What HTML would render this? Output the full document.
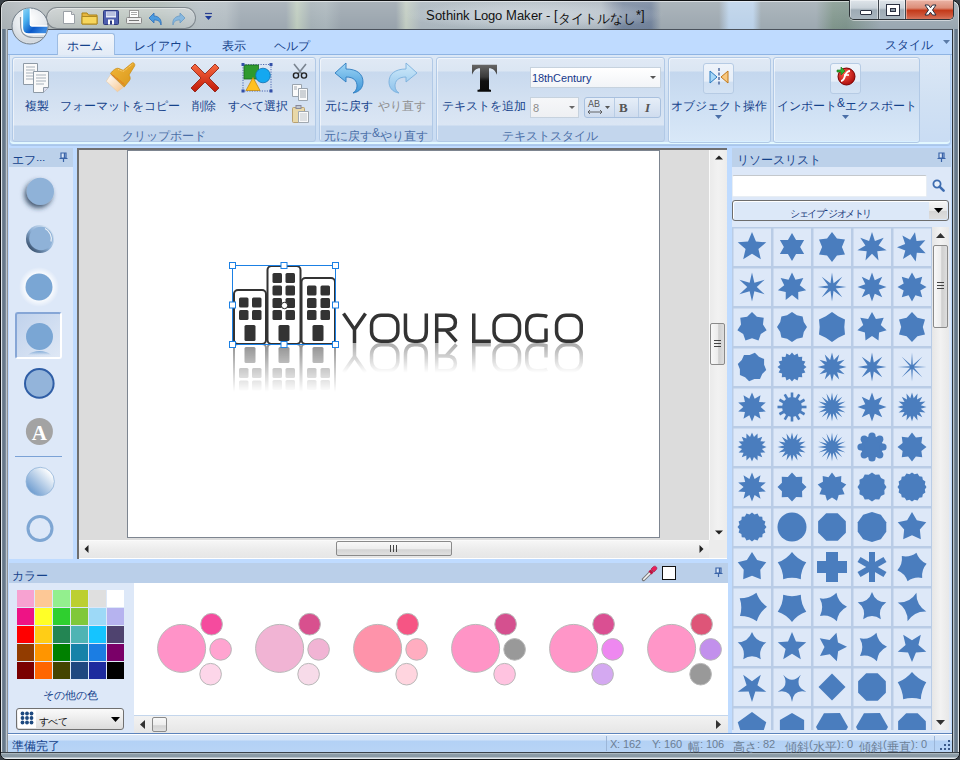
<!DOCTYPE html>
<html><head><meta charset="utf-8">
<style>
@font-face{font-family:"Liberation Sans";src:local("Liberation Sans"),local("LiberationSans");unicode-range:U+0000-2FFF,U+FB00-FEFF,U+FFF0-FFFF;}
@font-face{font-family:"Liberation Sans";src:local("Liberation Sans"),local("LiberationSans");size-adjust:133.33%;unicode-range:U+3000-9FFF,U+FF00-FFEF;}
*{box-sizing:border-box}
html,body{margin:0;padding:0}
body{width:960px;height:760px;overflow:hidden;position:relative;font-family:"Liberation Sans",sans-serif;font-size:12px;color:#15428b;background:#3a4148}
.a{position:absolute}
.j{position:relative;top:2.5px}
.t{position:absolute;white-space:nowrap;line-height:14px;font-size:12px}
svg{position:absolute;overflow:visible}
</style></head><body>
<!-- glass frame -->
<div class="a" style="left:0;top:0;width:960px;height:760px;border-radius:8px 8px 7px 7px;border:1px solid #101214;box-shadow:inset 0 0 0 1px rgba(255,255,255,.55);background:linear-gradient(180deg,rgba(255,255,255,.18) 0,rgba(255,255,255,0) 30px),linear-gradient(90deg,#a6aeb2 0px,#b4babe 30px,#a9b5ac 110px,#a8b4b0 160px,#b2bcc2 200px,#b0bac0 225px,#9ca7b0 240px,#9ca7b0 285px,#bccabc 296px,#a2aeb4 310px,#a6b2b8 325px,#97a2ab 340px,#97a2ab 395px,#c0cbc0 405px,#a8b4bc 420px,#aab6be 500px,#a8b3bc 600px,#8794a6 612px,#72839b 622px,#6e7f98 650px,#9ba6ae 660px,#9ba6ae 718px,#b9d0e8 728px,#b9d0e8 752px,#9ca8b0 760px,#9ca8b0 815px,#7d9389 832px,#7a9088 845px,#98a6b0 880px,#98a6b0 960px)"></div>
<div class="a" style="left:405px;top:0px;width:260px;height:30px;background:radial-gradient(closest-side,rgba(235,240,245,.5) 0%,rgba(225,232,238,.3) 60%,rgba(210,220,228,0) 100%)"></div>
<!-- left/right/bottom frame streaks -->
<div class="a" style="left:1px;top:29px;width:7px;height:725px;border-radius:0 0 0 6px;background:linear-gradient(90deg,#dfe6ea 0,#dfe6ea 1px,#7d8c9a 1px,#5f7284 3px,#8797a6 5px,#eef2f4 6px,#2b333b 7px)"></div>
<div class="a" style="left:952px;top:29px;width:7px;height:725px;background:linear-gradient(90deg,#2b333b 0,#2b333b 1px,#eef2f4 1px,#8797a6 2px,#5f7284 4px,#7d8c9a 6px,#dfe6ea 6px)"></div>
<div class="a" style="left:1px;top:752px;width:958px;height:7px;border-radius:0 0 6px 6px;background:linear-gradient(#3b434b 0,#3b434b 1px,#c6d0d6 1px,#8e9ea8 2px,#8898a4 5px,#e6ecf0 6px,#e6ecf0 7px)"></div>
<!-- client -->
<div class="a" style="left:8px;top:29px;width:944px;height:723px;border-top:1px solid #4a525c;background:#bfdbff"></div>
<!-- QAT pill -->
<div class="a" style="left:46px;top:7px;width:150px;height:22px;border-radius:11px;border:1px solid rgba(60,70,80,.5);background:linear-gradient(rgba(255,255,255,.32),rgba(255,255,255,.12));box-shadow:inset 0 1px 0 rgba(255,255,255,.4)"></div>
<!-- QAT icons -->
<svg style="left:62px;top:10px" width="14" height="15" viewBox="0 0 14 15"><path d="M1.5 1.5h8l3 3v9h-11z" fill="#fff" stroke="#9aa0a6"/><path d="M9.5 1.5v3h3" fill="#ddd" stroke="#9aa0a6"/></svg>
<svg style="left:81px;top:11px" width="17" height="14" viewBox="0 0 17 14"><path d="M1 2h5l1.5 2H16v9H1z" fill="#e6b640" stroke="#a98215"/><path d="M1 5.5h15V13H1z" fill="#f7d65c" stroke="#b08a20"/></svg>
<svg style="left:103px;top:10px" width="16" height="15" viewBox="0 0 16 15"><rect x=".5" y=".5" width="15" height="14" rx="1" fill="#4e5fae" stroke="#2d3a80"/><rect x="3" y="1.5" width="10" height="6" fill="#e9eef8"/><path d="M3.5 3h9M3.5 5h9" stroke="#8893c8"/><rect x="5" y="9.5" width="6" height="5" fill="#fff"/><rect x="7" y="10.5" width="2" height="4" fill="#2d3a80"/></svg>
<svg style="left:126px;top:10px" width="16" height="15" viewBox="0 0 16 15"><rect x="3.5" y=".5" width="9" height="7" fill="#fff" stroke="#999"/><path d="M5 2.5h6M5 4.5h6" stroke="#aaa"/><rect x=".5" y="7.5" width="15" height="6" rx="1" fill="#eee" stroke="#888"/><path d="M3 10.5h10" stroke="#777"/></svg>
<svg style="left:148px;top:12px" width="16" height="14" viewBox="0 0 16 14"><path d="M6 1L1 6l5 5V8c4 0 6 1 7 5 1-5-2-9-7-9z" fill="#4a9be0" stroke="#2e6fb8" stroke-width=".8"/></svg>
<svg style="left:170px;top:12px" width="16" height="14" viewBox="0 0 16 14"><path d="M10 1l5 5-5 5V8C6 8 4 9 3 13 2 8 5 4 10 4z" fill="#88b8df" stroke="#6a9ac4" stroke-width=".8"/></svg>
<svg style="left:205px;top:13px" width="7" height="8" viewBox="0 0 7 8"><path d="M0 .5h7" stroke="#2a3f8f" stroke-width="1.2"/><path d="M0 3h7L3.5 7z" fill="#1c3a9a"/></svg>
<!-- app orb -->
<svg style="left:11px;top:7px;z-index:50" width="38" height="38" viewBox="0 0 38 38">
<defs><radialGradient id="orb" cx=".5" cy=".3" r=".75"><stop offset="0" stop-color="#ffffff"/><stop offset=".55" stop-color="#e6eaee"/><stop offset=".85" stop-color="#d2d8de"/><stop offset="1" stop-color="#eef1f4"/></radialGradient>
<linearGradient id="lg" x1="0" y1="0" x2=".9" y2=".75"><stop offset="0" stop-color="#9adcf8"/><stop offset=".35" stop-color="#4ab0ee"/><stop offset=".7" stop-color="#0a58c8"/><stop offset="1" stop-color="#3a88e0"/></linearGradient>
<clipPath id="oc"><circle cx="19" cy="19" r="17.5"/></clipPath></defs>
<circle cx="19" cy="19" r="18" fill="url(#orb)" stroke="#6f7b86" stroke-width="1"/>
<g clip-path="url(#oc)">
<path d="M9.5 10c0 10 0 14 3 17s6 3.5 10 3.5h13" fill="none" stroke="#8e98a2" stroke-width="1.2"/>
<path d="M11.5 0h7.8v17.5c0 1 .5 1.5 1.5 1.5h17v8H17.5c-4 0-6-2.3-6-6z" fill="url(#lg)" stroke="#fff" stroke-width="1.3"/>
</g>
</svg>
<!-- title -->
<div class="t" style="left:426px;top:9px;font-size:12.5px;color:#111;line-height:14px">Sothink Logo Maker - [<span class="j">タイトルなし</span>*]</div>
<!-- window buttons -->
<div class="a" style="left:849px;top:0;width:105px;height:20px;border:1px solid #2e3338;border-top:none;border-radius:0 0 5px 5px;overflow:hidden;box-shadow:0 1px 0 rgba(255,255,255,.5)">
 <div class="a" style="left:0;top:0;width:29px;height:20px;background:linear-gradient(#dfe5ea 0,#c9d2d9 40%,#9eabb5 50%,#aab6bf 100%);border-right:1px solid #3e454c;box-shadow:inset 0 0 0 1px rgba(255,255,255,.45)"></div>
 <div class="a" style="left:29px;top:0;width:27px;height:20px;background:linear-gradient(#dfe5ea 0,#c9d2d9 40%,#9eabb5 50%,#aab6bf 100%);border-right:1px solid #3e454c;box-shadow:inset 0 0 0 1px rgba(255,255,255,.45)"></div>
 <div class="a" style="left:56px;top:0;width:48px;height:20px;background:linear-gradient(#eab4a6 0,#dc8d78 40%,#c43a1a 52%,#cf5a3e 80%,#d98068 100%);box-shadow:inset 0 0 0 1px rgba(255,220,210,.5)"></div>
 <div class="a" style="left:10px;top:10px;width:12px;height:5px;background:#fff;border:1px solid #2a3040;border-radius:1px"></div>
 <div class="a" style="left:37px;top:5px;width:12px;height:10px;background:#8e9aa6;border:3px solid #fff;box-shadow:0 0 0 1px #2a3040,inset 0 0 0 1px #2a3040"></div>
 <svg style="left:74px;top:4px" width="13" height="12" viewBox="0 0 13 12"><path d="M1 1h3.5l2 2.8 2-2.8H12L8.5 6 12 11H8.5l-2-2.8-2 2.8H1L4.5 6z" fill="#fff" stroke="#2a3040" stroke-width="1" stroke-linejoin="round"/></svg>
</div>
<!-- tab row -->
<div class="a" style="left:8px;top:30px;width:944px;height:25px;background:#bfdbff;border-bottom:1px solid #8fb4e3"></div>
<div class="a" style="left:57px;top:33px;width:58px;height:23px;border:1px solid #9dbce2;border-bottom:none;border-radius:3px 3px 0 0;background:linear-gradient(#f2f6fb,#e2ebf6)"></div>
<div class="t" style="left:67px;top:36px"><span class="j">ホーム</span></div>
<div class="t" style="left:134px;top:36px"><span class="j">レイアウト</span></div>
<div class="t" style="left:222px;top:36px"><span class="j">表示</span></div>
<div class="t" style="left:274px;top:36px"><span class="j">ヘルプ</span></div>
<div class="t" style="left:885px;top:35px"><span class="j">スタイル</span></div>
<svg style="left:943px;top:40px" width="7" height="4"><path d="M0 0h7L3.5 4z" fill="#5b7ba8"/></svg>
<!-- ribbon body -->
<div class="a" style="left:9px;top:55px;width:942px;height:90px;border:1px solid #aecbee;border-top:none;border-radius:0 0 4px 4px;background:linear-gradient(#dce8f6 0,#d1e1f3 50%,#c9dcf3 100%);box-shadow:inset 0 -2px 0 #e2f8ff,0 1px 0 #a9c6ea"></div>
<!-- groups -->
<div class="a grp" style="left:12px;top:57px;width:304px;height:85px"></div>
<div class="a grp" style="left:319px;top:57px;width:114px;height:85px"></div>
<div class="a grp" style="left:436px;top:57px;width:229px;height:85px"></div>
<div class="a grp2" style="left:668px;top:57px;width:103px;height:86px"></div>
<div class="a grp2" style="left:773px;top:57px;width:147px;height:86px"></div>
<style>
.grp{border:1px solid #b1c9e6;border-radius:3px;background:linear-gradient(#e0e9f5 0,#dbe6f3 13px,#c8d9ee 14px,#d2e0f1 40px,#dbe6f4 67px,#c3d6ed 68px,#c3d6ed 100%);box-shadow:inset 1px 1px 0 rgba(255,255,255,.55)}
.grp2{border:1px solid #b1c9e6;border-radius:3px;background:linear-gradient(#e0e9f5 0,#dbe6f3 13px,#c4d7ee 14px,#cddff3 45px,#d9e8f8 100%);box-shadow:inset 1px 1px 0 rgba(255,255,255,.55),inset 0 -1px 0 #d8f0ff}
.gt{color:#4a6fa8}
.gray{color:#8e8e8e}
</style>
<!-- group titles -->
<div class="t gt" style="left:122px;top:126px"><span class="j">クリップボード</span></div>
<div class="t gt" style="left:324px;top:126px"><span class="j">元に戻す</span>&amp;<span class="j">やり直す</span></div>
<div class="t gt" style="left:502px;top:126px"><span class="j">テキストスタイル</span></div>
<!-- labels -->
<div class="t" style="left:25px;top:96px"><span class="j">複製</span></div>
<div class="t" style="left:60px;top:96px"><span class="j">フォーマットをコピー</span></div>
<div class="t" style="left:192px;top:96px"><span class="j">削除</span></div>
<div class="t" style="left:228px;top:96px"><span class="j">すべて選択</span></div>
<div class="t" style="left:325px;top:96px"><span class="j">元に戻す</span></div>
<div class="t gray" style="left:378px;top:96px"><span class="j">やり直す</span></div>
<div class="t" style="left:442px;top:96px"><span class="j">テキストを追加</span></div>
<div class="t" style="left:671px;top:96px"><span class="j">オブジェクト操作</span></div>
<div class="t" style="left:777px;top:96px"><span class="j">インポート</span>&amp;<span class="j">エクスポート</span></div>
<svg style="left:715px;top:115px" width="7" height="4"><path d="M0 0h7L3.5 4z" fill="#4a6fa8"/></svg>
<svg style="left:842px;top:115px" width="7" height="4"><path d="M0 0h7L3.5 4z" fill="#4a6fa8"/></svg>
<!-- ribbon icons -->
<svg style="left:21px;top:62px" width="30" height="31" viewBox="0 0 30 31">
<path d="M2.5 1.5h14v21h-14z" fill="#fafafa" stroke="#8e9aa6"/>
<path d="M5 5h9M5 8h9M5 11h9M5 14h9M5 17h7" stroke="#a6b0ba"/>
<path d="M12.5 9.5h15v16l-5 5h-10z" fill="#fafafa" stroke="#8e9aa6"/>
<path d="M15 13h10M15 16h10M15 19h10M15 22h8" stroke="#a6b0ba"/>
<path d="M22.5 30.5v-5h5" fill="#dde" stroke="#8e9aa6"/>
</svg>
<svg style="left:100px;top:58px" width="45" height="40" viewBox="0 0 45 40">
<defs><linearGradient id="br" x1="0" y1="0" x2="1" y2="1"><stop offset="0" stop-color="#f2b73a"/><stop offset="1" stop-color="#d8961a"/></linearGradient>
<linearGradient id="bri" x1="0" y1="0" x2="1" y2="1"><stop offset="0" stop-color="#ffffff"/><stop offset="1" stop-color="#f7c48a"/></linearGradient></defs>
<path d="M10.5 16.8L6.3 23.2 17.4 33.7 23.6 29z" fill="url(#bri)" stroke="#e8c8a0" stroke-width=".6"/>
<path d="M10.5 15.5C13 12 16 10 18 10.3 20 10.5 22 12.5 23.5 12L32 5C33.5 4 35.5 6 34.6 8L29 17C30.5 19 30.5 21 29.5 22.5L24.2 29z" fill="url(#br)" stroke="#c88a10" stroke-width=".7"/>
<path d="M12.5 17.5L25 27.5M11.5 16L24.5 26" stroke="#e06a20" stroke-width=".8" stroke-dasharray="1 .8"/>
<path d="M18 11.5C20 12 22 13.5 24 13L32.5 6" stroke="#ffe0a0" stroke-width=".8" fill="none" stroke-dasharray="1 .8"/>
</svg>
<svg style="left:190px;top:63px" width="30" height="30" viewBox="0 0 30 30">
<defs><linearGradient id="xr" x1="0" y1="0" x2="0" y2="1"><stop offset="0" stop-color="#f86a40"/><stop offset="1" stop-color="#c01808"/></linearGradient></defs>
<path d="M5 1L15 11 25 1 29 5 19 15 29 25 25 29 15 19 5 29 1 25 11 15 1 5z" fill="url(#xr)" stroke="#8a1a0a" stroke-width=".8" stroke-linejoin="round"/>
</svg>
<svg style="left:241px;top:62px" width="32" height="31" viewBox="0 0 32 31">
<rect x="2" y="2.5" width="28" height="26.5" fill="none" stroke="#2b4aa0" stroke-width=".8" stroke-dasharray="1.2 1.3"/>
<rect x="3" y="3" width="14.5" height="14" fill="#2e9a2e" stroke="#1d6a1d" stroke-width=".8"/>
<circle cx="22" cy="13.5" r="7.3" fill="#14a8f0" stroke="#1070b0" stroke-width=".8"/>
<path d="M12 15.5l7 13H5z" fill="#ffc020" stroke="#c08a10" stroke-width=".8"/>
<rect x=".5" y="1" width="3" height="3" fill="#3350a8"/><rect x="28.5" y="1" width="3" height="3" fill="#3350a8"/><rect x=".5" y="27.5" width="3" height="3" fill="#3350a8"/><rect x="28.5" y="27.5" width="3" height="3" fill="#3350a8"/>
</svg>
<svg style="left:291px;top:63px" width="18" height="16" viewBox="0 0 18 16"><path d="M3 1l8 10M15 1L7 11" stroke="#7a8490" stroke-width="1.6"/><circle cx="5" cy="12.5" r="2.6" fill="none" stroke="#222" stroke-width="1.4"/><circle cx="13" cy="12.5" r="2.6" fill="none" stroke="#222" stroke-width="1.4"/></svg>
<svg style="left:292px;top:84px" width="17" height="17" viewBox="0 0 17 17"><path d="M.5 .5h9v12h-9z" fill="#fbfbfb" stroke="#9aa4ae"/><path d="M6.5 4.5h9v12h-9z" fill="#fbfbfb" stroke="#9aa4ae"/><path d="M8 7h6M8 9h6M8 11h6M8 13h6M2 3h3M2 5h3" stroke="#8a949e" stroke-width=".8"/></svg>
<svg style="left:292px;top:105px" width="17" height="18" viewBox="0 0 17 18"><rect x=".5" y="2.5" width="12" height="15" rx="1" fill="#e8d8a8" stroke="#b8a070"/><rect x="4" y=".5" width="5" height="3" fill="#c0c8d0" stroke="#889"/><path d="M6.5 6.5h10v11h-10z" fill="#fafafa" stroke="#a0a8b0"/><path d="M8 9h7M8 11h7M8 13h7M8 15h7" stroke="#c0c6cc"/></svg>
<!-- undo redo -->
<svg style="left:334px;top:62px" width="30" height="31" viewBox="0 0 30 31">
<defs><linearGradient id="ug" x1="0" y1="0" x2="0" y2="1"><stop offset="0" stop-color="#9fd6f6"/><stop offset="1" stop-color="#3c95d8"/></linearGradient></defs>
<path d="M12 1L1 11l11 9v-5c8 0 11 4 11 9 0 3-2 6-4 7 7-1 10-6 10-11 0-8-6-13-17-13z" fill="url(#ug)" stroke="#2e7cc0" stroke-width=".9" stroke-linejoin="round"/>
</svg>
<svg style="left:388px;top:62px" width="30" height="31" viewBox="0 0 30 31">
<defs><linearGradient id="rg" x1="0" y1="0" x2="0" y2="1"><stop offset="0" stop-color="#d2ebfa"/><stop offset="1" stop-color="#8cc2ec"/></linearGradient></defs>
<path d="M18 1l11 10-11 9v-5C10 15 7 19 7 24c0 3 2 6 4 7-7-1-10-6-10-11C1 12 7 7 18 7z" fill="url(#rg)" stroke="#7ab0dc" stroke-width=".9" stroke-linejoin="round"/>
</svg>
<!-- T icon -->
<svg style="left:470px;top:63px" width="28" height="30" viewBox="0 0 28 30">
<defs><linearGradient id="tg" x1="0" y1="0" x2="0" y2="1"><stop offset="0" stop-color="#666"/><stop offset=".45" stop-color="#3a3a3a"/><stop offset=".6" stop-color="#111"/><stop offset="1" stop-color="#0a0a0a"/></linearGradient></defs>
<path d="M2 1.8H27V11.8C25.5 8 23 5.3 19 5.3V26C19 26.5 20 26.6 21 26.8V28.7H7.5V26.8C9 26.6 10 26.5 10 26V5.3C6 5.3 3.5 8 2 11.8Z" fill="url(#tg)"/>
</svg>
<!-- font combos -->
<div class="a" style="left:530px;top:67px;width:131px;height:21px;border:1px solid #c6d2de;background:linear-gradient(#fff,#f2f4f7)"></div>
<div class="t" style="left:532px;top:71px;font-size:11px;color:#14388a">18thCentury</div>
<svg style="left:650px;top:76px" width="6" height="3"><path d="M0 0h6L3 3z" fill="#555"/></svg>
<div class="a" style="left:530px;top:97px;width:49px;height:21px;border:1px solid #c6d2de;background:linear-gradient(#f6f7f9,#eef0f3)"></div>
<div class="t" style="left:533px;top:101px;font-size:11px;color:#8a8a8a">8</div>
<svg style="left:569px;top:106px" width="6" height="3"><path d="M0 0h6L3 3z" fill="#666"/></svg>
<div class="a" style="left:584px;top:97px;width:77px;height:21px;border:1px solid #a8c0de;border-radius:3px;background:linear-gradient(#e6eef8,#cfdcee)"></div>
<div class="a" style="left:614px;top:98px;width:1px;height:19px;background:#b8cce4"></div>
<div class="a" style="left:638px;top:98px;width:1px;height:19px;background:#b8cce4"></div>
<svg style="left:587px;top:99px" width="26" height="17" viewBox="0 0 26 17"><text x="1" y="8" font-family="Liberation Sans" font-size="8.5" fill="#555">AB</text><path d="M1 13h14M1 13l2-2M1 13l2 2M15 13l-2-2M15 13l-2 2" stroke="#555" stroke-width=".9" fill="none"/><path d="M18 7h5l-2.5 3z" fill="#555"/></svg>
<div class="t" style="left:619px;top:100px;font:bold 13px 'Liberation Serif';color:#555">B</div>
<div class="t" style="left:645px;top:100px;font:bold italic 13px 'Liberation Serif';color:#555">I</div>
<!-- object ops / import icon boxes -->
<div class="a" style="left:703px;top:63px;width:31px;height:31px;border:1px solid #b6cbe4;border-radius:3px;background:linear-gradient(#eef3fa 0,#e6eef8 60%,#cfdff2 61%,#d4e3f4 100%)"></div>
<svg style="left:709px;top:67px" width="20" height="20" viewBox="0 0 20 20"><path d="M1 4v12l7-6z" fill="#a8d8f8" stroke="#2a7ac0"/><path d="M19 4v12l-7-6z" fill="#f8c880" stroke="#c07818"/><path d="M10 1v18" stroke="#2a4a8a" stroke-width="1.2" stroke-dasharray="3 1.5"/></svg>
<div class="a" style="left:830px;top:63px;width:31px;height:31px;border:1px solid #b6cbe4;border-radius:3px;background:linear-gradient(#eef3fa 0,#e6eef8 60%,#cfdff2 61%,#d4e3f4 100%)"></div>
<svg style="left:836px;top:66px" width="20" height="20" viewBox="0 0 20 20"><defs><radialGradient id="fl" cx=".4" cy=".35" r=".7"><stop offset="0" stop-color="#ff5a4a"/><stop offset="1" stop-color="#a80808"/></radialGradient></defs><circle cx="10.5" cy="10.5" r="8.5" fill="url(#fl)" stroke="#700"/><path d="M14 5c-3 0-4 2-5 5s-2 5-4 5" stroke="#fff" stroke-width="2" fill="none"/><path d="M8 9h5" stroke="#fff" stroke-width="1.6"/><path d="M1 4h4V1l4 4-4 4V6H1z" fill="#30b030" stroke="#107010" stroke-width=".6"/></svg>
<!-- left effects panel -->
<div class="a" style="left:9px;top:148px;width:64px;height:411px;background:#dde8f8"></div>
<div class="a" style="left:9px;top:148px;width:64px;height:19px;background:#bcd1ea"></div>
<div class="t" style="left:12px;top:150px"><span class="j">エフ</span>...</div>
<svg style="left:59px;top:152px" width="9" height="10" viewBox="0 0 9 10"><path d="M2 1h5v5H2z" fill="#dde8f8" stroke="#3a64a8" stroke-width="1.2"/><path d="M5.5 1v5" stroke="#3a64a8" stroke-width="1.4"/><path d="M.5 6.5h8M4.5 6.5v3.5" stroke="#3a64a8" stroke-width="1.2"/></svg>
<!-- selected effect bg -->
<div class="a" style="left:15px;top:312px;width:47px;height:47px;border:2px solid #86a6d6;border-right-color:#fff;border-bottom-color:#fff;border-radius:3px;background:linear-gradient(135deg,#c0d2ec,#dfe8f5)"></div>
<svg style="left:9px;top:167px" width="64" height="392" viewBox="0 0 64 392">
<defs>
<filter id="sh1" x="-50%" y="-50%" width="200%" height="200%"><feGaussianBlur in="SourceAlpha" stdDeviation="2.4"/><feOffset dx="-2.5" dy="2.5" result="o"/><feFlood flood-color="#1c3450" flood-opacity=".8"/><feComposite in2="o" operator="in"/><feMerge><feMergeNode/><feMergeNode in="SourceGraphic"/></feMerge></filter>
<filter id="gl" x="-50%" y="-50%" width="200%" height="200%"><feMorphology in="SourceAlpha" operator="dilate" radius="2"/><feGaussianBlur stdDeviation="2.5"/><feFlood flood-color="#fff"/><feComposite in2="" operator="in"/></filter>
<radialGradient id="glow"><stop offset=".6" stop-color="#fff" stop-opacity="1"/><stop offset="1" stop-color="#fff" stop-opacity="0"/></radialGradient>
<linearGradient id="bev" x1="1" y1="0" x2="0" y2="1"><stop offset="0" stop-color="#f4f8fc"/><stop offset=".5" stop-color="#8fb2d8"/><stop offset="1" stop-color="#1a2e48"/></linearGradient>
<linearGradient id="grd" x1="1" y1="0" x2="0" y2="1"><stop offset=".15" stop-color="#ffffff"/><stop offset=".85" stop-color="#6f9dd0"/></linearGradient>
<linearGradient id="refl" x1="0" y1="0" x2="0" y2="1"><stop offset="0" stop-color="#7aa6d4" stop-opacity=".9"/><stop offset="1" stop-color="#7aa6d4" stop-opacity="0"/></linearGradient>
</defs>
<circle cx="31.3" cy="24.4" r="13.7" fill="#8fb2d8" filter="url(#sh1)"/>
<circle cx="31" cy="72" r="14" fill="url(#bev)"/>
<circle cx="32" cy="71.5" r="11.8" fill="#8fb2d8"/>
<path d="M36 61.5a11.5 11.5 0 0 1 6 13" fill="none" stroke="#fff" stroke-width="1.2" stroke-opacity=".8"/>
<circle cx="30" cy="120" r="20" fill="url(#glow)"/>
<circle cx="30" cy="120" r="13.5" fill="#7aa6d4"/>
<circle cx="30.5" cy="169.5" r="13.5" fill="#7aa6d4"/>
<path d="M19 188c3-3 7-4 11.5-4s8.5 1 11.5 4z" fill="url(#refl)"/>
<circle cx="30.3" cy="216.4" r="14.3" fill="#93b4da" stroke="#2f5ea6" stroke-width="2"/>
<circle cx="30.4" cy="264.4" r="13.5" fill="#a3a3a3"/>
<text x="30.4" y="272.5" text-anchor="middle" font-family="Liberation Serif" font-weight="bold" font-size="21" fill="#fff">A</text>
<path d="M6 289.5h47" stroke="#7ba2d6" stroke-width="1"/>
<circle cx="31.2" cy="314.5" r="14.2" fill="url(#grd)" stroke="#8fb2d8" stroke-width=".8"/>
<circle cx="31" cy="361.5" r="12" fill="none" stroke="#7ea6d3" stroke-width="3"/>
</svg>
<!-- canvas -->
<div class="a" style="left:77px;top:148px;width:650px;height:411px;background:#dcdcdc;border-left:2px solid #6f6f6f;border-top:2px solid #6f6f6f;box-shadow:inset -1px -1px 0 #fff"></div>
<div class="a" style="left:127px;top:150px;width:533px;height:388px;background:#fff;border:1px solid #7d8590"></div>
<!-- v scroll -->
<div class="a" style="left:709px;top:150px;width:18px;height:390px;background:linear-gradient(90deg,#fafafa 0,#fafafa 1px,#ebebeb 1px,#f2f2f2 50%,#ececec)"></div>
<svg style="left:715px;top:155px" width="8" height="5"><path d="M0 4.5h8L4 .5z" fill="#222"/></svg>
<svg style="left:715px;top:530px" width="8" height="5"><path d="M0 .5h8L4 4.5z" fill="#222"/></svg>
<div class="a" style="left:710px;top:323px;width:15px;height:42px;border:1px solid #8a8a8a;border-radius:2px;background:linear-gradient(90deg,#f8f8f8 0,#ececec 50%,#cfcfcf 60%,#dedede 100%)"></div>
<div class="a" style="left:714px;top:340px;width:7px;height:8px;background:linear-gradient(#444 0,#444 1px,transparent 1px,transparent 3px,#444 3px,#444 4px,transparent 4px,transparent 6px,#444 6px,#444 7px,transparent 7px)"></div>
<!-- h scroll -->
<div class="a" style="left:79px;top:540px;width:630px;height:18px;background:linear-gradient(#f6f6f6 0,#ececec 50%,#e6e6e6 100%);border-top:1px solid #fafafa"></div>
<div class="a" style="left:709px;top:540px;width:18px;height:18px;background:#ececec"></div>
<svg style="left:84px;top:545px" width="5" height="8"><path d="M4.5 0v8L.5 4z" fill="#222"/></svg>
<svg style="left:699px;top:545px" width="5" height="8"><path d="M.5 0v8L4.5 4z" fill="#222"/></svg>
<div class="a" style="left:336px;top:541px;width:116px;height:15px;border:1px solid #8a8a8a;border-radius:2px;background:linear-gradient(#f8f8f8 0,#eeeeee 50%,#d4d4d4 60%,#e0e0e0 100%)"></div>
<div class="a" style="left:390px;top:545px;width:8px;height:7px;background:linear-gradient(90deg,#444 0,#444 1px,transparent 1px,transparent 3px,#444 3px,#444 4px,transparent 4px,transparent 6px,#444 6px,#444 7px,transparent 7px)"></div>
<svg style="left:128px;top:151px" width="531" height="386" viewBox="128 151 531 386">
<defs>
<linearGradient id="rfade" gradientUnits="userSpaceOnUse" x1="0" y1="344" x2="0" y2="392"><stop offset="0" stop-color="#fff" stop-opacity=".55"/><stop offset="1" stop-color="#fff" stop-opacity="0"/></linearGradient>
<mask id="rmask" maskUnits="userSpaceOnUse" x="128" y="344" width="531" height="60"><rect x="128" y="344" width="531" height="60" fill="url(#rfade)"/></mask>
<linearGradient id="tfade" gradientUnits="userSpaceOnUse" x1="0" y1="343" x2="0" y2="373"><stop offset="0" stop-color="#fff" stop-opacity=".42"/><stop offset="1" stop-color="#fff" stop-opacity="0"/></linearGradient>
<mask id="tmask" maskUnits="userSpaceOnUse" x="128" y="343" width="531" height="40"><rect x="128" y="343" width="531" height="40" fill="url(#tfade)"/></mask>
</defs>
<g mask="url(#rmask)"><g transform="translate(0,688) scale(1,-1)"><rect x="234" y="290" width="32" height="54" rx="4" fill="#fff" stroke="#333" stroke-width="2"/>
<rect x="267.5" y="266" width="33" height="78" rx="4" fill="#fff" stroke="#333" stroke-width="2"/>
<rect x="301.5" y="278" width="33.5" height="66" rx="4" fill="#fff" stroke="#333" stroke-width="2"/>
<rect x="239" y="297.5" width="9.5" height="10" rx="1.5" fill="#333"/>
<rect x="239" y="310" width="9.5" height="10" rx="1.5" fill="#333"/>
<rect x="252" y="297.5" width="9.5" height="10" rx="1.5" fill="#333"/>
<rect x="252" y="310" width="9.5" height="10" rx="1.5" fill="#333"/>
<rect x="272.5" y="273" width="9.5" height="10" rx="1.5" fill="#333"/>
<rect x="272.5" y="285.5" width="9.5" height="10" rx="1.5" fill="#333"/>
<rect x="272.5" y="298" width="9.5" height="10" rx="1.5" fill="#333"/>
<rect x="272.5" y="310" width="9.5" height="10" rx="1.5" fill="#333"/>
<rect x="285.5" y="273" width="9.5" height="10" rx="1.5" fill="#333"/>
<rect x="285.5" y="285.5" width="9.5" height="10" rx="1.5" fill="#333"/>
<rect x="285.5" y="298" width="9.5" height="10" rx="1.5" fill="#333"/>
<rect x="285.5" y="310" width="9.5" height="10" rx="1.5" fill="#333"/>
<rect x="307" y="285.5" width="9.5" height="10" rx="1.5" fill="#333"/>
<rect x="307" y="298" width="9.5" height="10" rx="1.5" fill="#333"/>
<rect x="307" y="310" width="9.5" height="10" rx="1.5" fill="#333"/>
<rect x="320.5" y="285.5" width="9.5" height="10" rx="1.5" fill="#333"/>
<rect x="320.5" y="298" width="9.5" height="10" rx="1.5" fill="#333"/>
<rect x="320.5" y="310" width="9.5" height="10" rx="1.5" fill="#333"/>
<rect x="244.5" y="325" width="11" height="16" rx="1.5" fill="#333"/>
<rect x="278.5" y="325" width="11" height="16" rx="1.5" fill="#333"/>
<rect x="312.5" y="325" width="11" height="16" rx="1.5" fill="#333"/></g></g>
<g mask="url(#tmask)"><g transform="translate(0,686) scale(1,-1)"><g fill="none" stroke="#333" stroke-width="3.5" stroke-linejoin="miter"><path d="M343.5 313.5 L354.5 329.5 L365.5 313.5 M354.5 329.5 V343"/><rect x="371.55" y="315.25" width="26.3" height="26" rx="9.5"/><path d="M405.45 313.5 V331.5 C405.45 338.5 408.5 341.25 414.5 341.25 H417.5 C423.5 341.25 426.3 338.5 426.3 331.5 V313.5"/><path d="M436.7 343 V315.25 H446.5 C452.8 315.25 455.4 318 455.4 322.6 C455.4 327.5 452.8 330 446.5 330 H436.7 M446 330 L456.4 341.5"/><path d="M473.75 313.5 V341.25 H490.8"/><rect x="494.05" y="315.25" width="25.45" height="26" rx="9.5"/><path d="M547.2 316.6 C545 315.5 542 315.25 538 315.25 H536.5 C530 315.25 526.75 318.5 526.75 326 V330.5 C526.75 338 530 341.25 536.5 341.25 H538 C541.5 341.25 544 341 546 340.3 V328.5"/><rect x="556.55" y="315.25" width="24.7" height="26" rx="9.5"/></g></g></g>
<rect x="234" y="290" width="32" height="54" rx="4" fill="#fff" stroke="#333" stroke-width="2"/>
<rect x="267.5" y="266" width="33" height="78" rx="4" fill="#fff" stroke="#333" stroke-width="2"/>
<rect x="301.5" y="278" width="33.5" height="66" rx="4" fill="#fff" stroke="#333" stroke-width="2"/>
<rect x="239" y="297.5" width="9.5" height="10" rx="1.5" fill="#333"/>
<rect x="239" y="310" width="9.5" height="10" rx="1.5" fill="#333"/>
<rect x="252" y="297.5" width="9.5" height="10" rx="1.5" fill="#333"/>
<rect x="252" y="310" width="9.5" height="10" rx="1.5" fill="#333"/>
<rect x="272.5" y="273" width="9.5" height="10" rx="1.5" fill="#333"/>
<rect x="272.5" y="285.5" width="9.5" height="10" rx="1.5" fill="#333"/>
<rect x="272.5" y="298" width="9.5" height="10" rx="1.5" fill="#333"/>
<rect x="272.5" y="310" width="9.5" height="10" rx="1.5" fill="#333"/>
<rect x="285.5" y="273" width="9.5" height="10" rx="1.5" fill="#333"/>
<rect x="285.5" y="285.5" width="9.5" height="10" rx="1.5" fill="#333"/>
<rect x="285.5" y="298" width="9.5" height="10" rx="1.5" fill="#333"/>
<rect x="285.5" y="310" width="9.5" height="10" rx="1.5" fill="#333"/>
<rect x="307" y="285.5" width="9.5" height="10" rx="1.5" fill="#333"/>
<rect x="307" y="298" width="9.5" height="10" rx="1.5" fill="#333"/>
<rect x="307" y="310" width="9.5" height="10" rx="1.5" fill="#333"/>
<rect x="320.5" y="285.5" width="9.5" height="10" rx="1.5" fill="#333"/>
<rect x="320.5" y="298" width="9.5" height="10" rx="1.5" fill="#333"/>
<rect x="320.5" y="310" width="9.5" height="10" rx="1.5" fill="#333"/>
<rect x="244.5" y="325" width="11" height="16" rx="1.5" fill="#333"/>
<rect x="278.5" y="325" width="11" height="16" rx="1.5" fill="#333"/>
<rect x="312.5" y="325" width="11" height="16" rx="1.5" fill="#333"/>
<g fill="none" stroke="#333" stroke-width="3.5" stroke-linejoin="miter"><path d="M343.5 313.5 L354.5 329.5 L365.5 313.5 M354.5 329.5 V343"/><rect x="371.55" y="315.25" width="26.3" height="26" rx="9.5"/><path d="M405.45 313.5 V331.5 C405.45 338.5 408.5 341.25 414.5 341.25 H417.5 C423.5 341.25 426.3 338.5 426.3 331.5 V313.5"/><path d="M436.7 343 V315.25 H446.5 C452.8 315.25 455.4 318 455.4 322.6 C455.4 327.5 452.8 330 446.5 330 H436.7 M446 330 L456.4 341.5"/><path d="M473.75 313.5 V341.25 H490.8"/><rect x="494.05" y="315.25" width="25.45" height="26" rx="9.5"/><path d="M547.2 316.6 C545 315.5 542 315.25 538 315.25 H536.5 C530 315.25 526.75 318.5 526.75 326 V330.5 C526.75 338 530 341.25 536.5 341.25 H538 C541.5 341.25 544 341 546 340.3 V328.5"/><rect x="556.55" y="315.25" width="24.7" height="26" rx="9.5"/></g>
<rect x="232.5" y="265.5" width="103" height="79" fill="none" stroke="#1b80e4" stroke-width="1"/>
<rect x="229.5" y="262.5" width="6" height="6" fill="#fff" stroke="#1b80e4"/>
<rect x="229.5" y="302" width="6" height="6" fill="#fff" stroke="#1b80e4"/>
<rect x="229.5" y="341.5" width="6" height="6" fill="#fff" stroke="#1b80e4"/>
<rect x="281" y="262.5" width="6" height="6" fill="#fff" stroke="#1b80e4"/>
<rect x="281" y="341.5" width="6" height="6" fill="#fff" stroke="#1b80e4"/>
<rect x="332.5" y="262.5" width="6" height="6" fill="#fff" stroke="#1b80e4"/>
<rect x="332.5" y="302" width="6" height="6" fill="#fff" stroke="#1b80e4"/>
<rect x="332.5" y="341.5" width="6" height="6" fill="#fff" stroke="#1b80e4"/>
<circle cx="284.5" cy="305.5" r="3.2" fill="#fff" stroke="#222" stroke-width="1"/>
</svg>
<div class="a" style="left:732px;top:148px;width:219px;height:585px;background:#dde8f8"></div>
<div class="a" style="left:732px;top:148px;width:219px;height:19px;background:#bcd1ea"></div>
<div class="t" style="left:737px;top:150px"><span class="j">リソースリスト</span></div>
<svg style="left:937px;top:152px" width="9" height="10" viewBox="0 0 9 10"><path d="M2 1h5v5H2z" fill="#dde8f8" stroke="#3a64a8" stroke-width="1.2"/><path d="M5.5 1v5" stroke="#3a64a8" stroke-width="1.4"/><path d="M.5 6.5h8M4.5 6.5v3.5" stroke="#3a64a8" stroke-width="1.2"/></svg>
<div class="a" style="left:732px;top:175px;width:195px;height:22px;background:#fff;border:1px solid #e8eef4;border-top-color:#c4c8cc;border-radius:2px"></div>
<svg style="left:932px;top:179px" width="13" height="13" viewBox="0 0 13 13"><circle cx="5" cy="5" r="3.6" fill="#e8f0fa" stroke="#3d6cb0" stroke-width="1.8"/><path d="M7.6 7.6l4 4" stroke="#3d6cb0" stroke-width="2.6" stroke-linecap="round"/></svg>
<div class="a" style="left:732px;top:200px;width:217px;height:21px;border:1px solid #6d6d6d;border-radius:3px;background:#dce8f8;box-shadow:inset 1px 1px 0 #fff"></div>
<div class="a" style="left:929px;top:202px;width:18px;height:17px;background:linear-gradient(#f4f4f4 0,#e8e8e8 50%,#d4d4d4 51%,#dedede 100%)"></div>
<svg style="left:934px;top:208px" width="9" height="5"><path d="M0 0h9L4.5 5z" fill="#000"/></svg>
<div class="t" style="left:790px;top:203px;color:#1a3a7a;font-size:12px"><span class="j" style="font-size:9.5px;letter-spacing:-1.5px">シェイプ</span>-<span class="j" style="font-size:9.5px;letter-spacing:-1.5px">ジオメトリ</span></div>
<div class="a" style="left:732px;top:227px;width:200px;height:503px;background:#b9cce6;overflow:hidden">
<svg style="left:0;top:0" width="200" height="503" viewBox="732 227 200 503">
<g fill="#dde8f8">
<rect x="733.5" y="228.5" width="37.5" height="37.5"/>
<rect x="773.5" y="228.5" width="37.5" height="37.5"/>
<rect x="813.5" y="228.5" width="37.5" height="37.5"/>
<rect x="853.5" y="228.5" width="37.5" height="37.5"/>
<rect x="893.5" y="228.5" width="37.5" height="37.5"/>
<rect x="733.5" y="268.5" width="37.5" height="37.5"/>
<rect x="773.5" y="268.5" width="37.5" height="37.5"/>
<rect x="813.5" y="268.5" width="37.5" height="37.5"/>
<rect x="853.5" y="268.5" width="37.5" height="37.5"/>
<rect x="893.5" y="268.5" width="37.5" height="37.5"/>
<rect x="733.5" y="308.5" width="37.5" height="37.5"/>
<rect x="773.5" y="308.5" width="37.5" height="37.5"/>
<rect x="813.5" y="308.5" width="37.5" height="37.5"/>
<rect x="853.5" y="308.5" width="37.5" height="37.5"/>
<rect x="893.5" y="308.5" width="37.5" height="37.5"/>
<rect x="733.5" y="348.5" width="37.5" height="37.5"/>
<rect x="773.5" y="348.5" width="37.5" height="37.5"/>
<rect x="813.5" y="348.5" width="37.5" height="37.5"/>
<rect x="853.5" y="348.5" width="37.5" height="37.5"/>
<rect x="893.5" y="348.5" width="37.5" height="37.5"/>
<rect x="733.5" y="388.5" width="37.5" height="37.5"/>
<rect x="773.5" y="388.5" width="37.5" height="37.5"/>
<rect x="813.5" y="388.5" width="37.5" height="37.5"/>
<rect x="853.5" y="388.5" width="37.5" height="37.5"/>
<rect x="893.5" y="388.5" width="37.5" height="37.5"/>
<rect x="733.5" y="428.5" width="37.5" height="37.5"/>
<rect x="773.5" y="428.5" width="37.5" height="37.5"/>
<rect x="813.5" y="428.5" width="37.5" height="37.5"/>
<rect x="853.5" y="428.5" width="37.5" height="37.5"/>
<rect x="893.5" y="428.5" width="37.5" height="37.5"/>
<rect x="733.5" y="468.5" width="37.5" height="37.5"/>
<rect x="773.5" y="468.5" width="37.5" height="37.5"/>
<rect x="813.5" y="468.5" width="37.5" height="37.5"/>
<rect x="853.5" y="468.5" width="37.5" height="37.5"/>
<rect x="893.5" y="468.5" width="37.5" height="37.5"/>
<rect x="733.5" y="508.5" width="37.5" height="37.5"/>
<rect x="773.5" y="508.5" width="37.5" height="37.5"/>
<rect x="813.5" y="508.5" width="37.5" height="37.5"/>
<rect x="853.5" y="508.5" width="37.5" height="37.5"/>
<rect x="893.5" y="508.5" width="37.5" height="37.5"/>
<rect x="733.5" y="548.5" width="37.5" height="37.5"/>
<rect x="773.5" y="548.5" width="37.5" height="37.5"/>
<rect x="813.5" y="548.5" width="37.5" height="37.5"/>
<rect x="853.5" y="548.5" width="37.5" height="37.5"/>
<rect x="893.5" y="548.5" width="37.5" height="37.5"/>
<rect x="733.5" y="588.5" width="37.5" height="37.5"/>
<rect x="773.5" y="588.5" width="37.5" height="37.5"/>
<rect x="813.5" y="588.5" width="37.5" height="37.5"/>
<rect x="853.5" y="588.5" width="37.5" height="37.5"/>
<rect x="893.5" y="588.5" width="37.5" height="37.5"/>
<rect x="733.5" y="628.5" width="37.5" height="37.5"/>
<rect x="773.5" y="628.5" width="37.5" height="37.5"/>
<rect x="813.5" y="628.5" width="37.5" height="37.5"/>
<rect x="853.5" y="628.5" width="37.5" height="37.5"/>
<rect x="893.5" y="628.5" width="37.5" height="37.5"/>
<rect x="733.5" y="668.5" width="37.5" height="37.5"/>
<rect x="773.5" y="668.5" width="37.5" height="37.5"/>
<rect x="813.5" y="668.5" width="37.5" height="37.5"/>
<rect x="853.5" y="668.5" width="37.5" height="37.5"/>
<rect x="893.5" y="668.5" width="37.5" height="37.5"/>
<rect x="733.5" y="708.5" width="37.5" height="37.5"/>
<rect x="773.5" y="708.5" width="37.5" height="37.5"/>
<rect x="813.5" y="708.5" width="37.5" height="37.5"/>
<rect x="853.5" y="708.5" width="37.5" height="37.5"/>
<rect x="893.5" y="708.5" width="37.5" height="37.5"/>
</g><g fill="#4a7dbe">
<polygon points="752.00,232.00 755.97,241.54 766.27,242.36 758.42,249.09 760.82,259.14 752.00,253.75 743.18,259.14 745.58,249.09 737.73,242.36 748.03,241.54"/>
<polygon points="792.00,233.00 796.06,239.97 804.12,240.00 800.12,247.00 804.12,254.00 796.06,254.03 792.00,261.00 787.94,254.03 779.88,254.00 783.88,247.00 779.88,240.00 787.94,239.97"/>
<polygon points="832.00,232.00 836.95,238.43 844.99,239.50 841.90,247.00 844.99,254.50 836.95,255.57 832.00,262.00 827.05,255.57 819.01,254.50 822.10,247.00 819.01,239.50 827.05,238.43"/>
<polygon points="872.00,232.00 874.93,240.92 883.73,237.65 878.58,245.50 886.62,250.34 877.28,251.21 878.51,260.51 872.00,253.75 865.49,260.51 866.72,251.21 857.38,250.34 865.42,245.50 860.27,237.65 869.07,240.92"/>
<polygon points="914.98,232.30 916.53,241.02 925.35,240.16 919.50,246.82 925.67,253.18 916.82,252.75 915.69,261.54 910.51,254.35 902.94,258.95 905.32,250.42 897.00,247.37 905.17,243.91 902.36,235.50 910.15,239.73"/>
<polygon points="752.00,272.50 754.39,282.86 764.56,279.75 756.78,287.00 764.56,294.25 754.39,291.14 752.00,301.50 749.61,291.14 739.44,294.25 747.22,287.00 739.44,279.75 749.61,282.86"/>
<polygon points="792.00,272.50 795.46,279.81 803.34,277.96 799.78,285.23 806.14,290.23 798.24,291.97 798.29,300.06 792.00,294.98 785.71,300.06 785.76,291.97 777.86,290.23 784.22,285.23 780.66,277.96 788.54,279.81"/>
<polygon points="832.00,272.50 833.55,283.25 842.25,276.75 835.75,285.45 846.50,287.00 835.75,288.55 842.25,297.25 833.55,290.75 832.00,301.50 830.45,290.75 821.75,297.25 828.25,288.55 817.50,287.00 828.25,285.45 821.75,276.75 830.45,283.25"/>
<polygon points="872.00,272.50 874.77,280.30 882.25,276.75 878.70,284.23 886.50,287.00 878.70,289.77 882.25,297.25 874.77,293.70 872.00,301.50 869.23,293.70 861.75,297.25 865.30,289.77 857.50,287.00 865.30,284.23 861.75,276.75 869.23,280.30"/>
<polygon points="912.00,272.50 915.44,278.69 922.25,276.75 920.31,283.56 926.50,287.00 920.31,290.44 922.25,297.25 915.44,295.31 912.00,301.50 908.56,295.31 901.75,297.25 903.69,290.44 897.50,287.00 903.69,283.56 901.75,276.75 908.56,278.69"/>
<polygon points="752.00,312.00 756.88,316.86 763.73,317.65 762.97,324.50 766.62,330.34 760.80,334.01 758.51,340.51 752.00,338.25 745.49,340.51 743.20,334.01 737.38,330.34 741.03,324.50 740.27,317.65 747.12,316.86"/>
<polygon points="792.00,312.00 796.88,315.22 802.61,316.39 803.78,322.12 807.00,327.00 803.78,331.88 802.61,337.61 796.88,338.78 792.00,342.00 787.12,338.78 781.39,337.61 780.22,331.88 777.00,327.00 780.22,322.12 781.39,316.39 787.12,315.22"/>
<polygon points="832.00,312.00 838.15,316.35 844.99,319.50 844.30,327.00 844.99,334.50 838.15,337.65 832.00,342.00 825.85,337.65 819.01,334.50 819.70,327.00 819.01,319.50 825.85,316.35"/>
<polygon points="872.00,312.00 875.90,318.89 883.73,317.65 880.77,325.00 886.62,330.34 879.04,332.61 878.51,340.51 872.00,336.00 865.49,340.51 864.96,332.61 857.38,330.34 863.23,325.00 860.27,317.65 868.10,318.89"/>
<polygon points="912.00,312.00 917.40,317.65 924.99,319.50 922.80,327.00 924.99,334.50 917.40,336.35 912.00,342.00 906.60,336.35 899.01,334.50 901.20,327.00 899.01,319.50 906.60,317.65"/>
<polygon points="754.88,352.79 758.88,356.78 764.09,358.99 764.10,364.64 766.21,369.88 762.22,373.88 760.01,379.09 754.36,379.10 749.12,381.21 745.12,377.22 739.91,375.01 739.90,369.36 737.79,364.12 741.78,360.12 743.99,354.91 749.64,354.90"/>
<polygon points="792.00,352.50 794.32,355.34 797.55,353.60 798.61,357.11 802.25,356.75 801.89,360.39 805.40,361.45 803.66,364.68 806.50,367.00 803.66,369.32 805.40,372.55 801.89,373.61 802.25,377.25 798.61,376.89 797.55,380.40 794.32,378.66 792.00,381.50 789.68,378.66 786.45,380.40 785.39,376.89 781.75,377.25 782.11,373.61 778.60,372.55 780.34,369.32 777.50,367.00 780.34,364.68 778.60,361.45 782.11,360.39 781.75,356.75 785.39,357.11 786.45,353.60 789.68,355.34"/>
<polygon points="832.00,352.50 833.88,360.00 839.25,354.44 837.13,361.87 844.56,359.75 839.00,365.12 846.50,367.00 839.00,368.88 844.56,374.25 837.13,372.13 839.25,379.56 833.88,374.00 832.00,381.50 830.12,374.00 824.75,379.56 826.87,372.13 819.44,374.25 825.00,368.88 817.50,367.00 825.00,365.12 819.44,359.75 826.87,361.87 824.75,354.44 830.12,360.00"/>
<polygon points="872.00,352.50 873.83,362.58 882.25,356.75 876.42,365.17 886.50,367.00 876.42,368.83 882.25,377.25 873.83,371.42 872.00,381.50 870.17,371.42 861.75,377.25 867.58,368.83 857.50,367.00 867.58,365.17 861.75,356.75 870.17,362.58"/>
<polygon points="912.00,352.50 912.83,364.99 922.25,356.75 914.01,366.17 926.50,367.00 914.01,367.83 922.25,377.25 912.83,369.01 912.00,381.50 911.17,369.01 901.75,377.25 909.99,367.83 897.50,367.00 909.99,366.17 901.75,356.75 911.17,364.99"/>
<polygon points="752.00,392.50 754.69,398.73 760.52,395.27 759.04,401.89 765.79,402.52 760.70,407.00 765.79,411.48 759.04,412.11 760.52,418.73 754.69,415.27 752.00,421.50 749.31,415.27 743.48,418.73 744.96,412.11 738.21,411.48 743.30,407.00 738.21,402.52 744.96,401.89 743.48,395.27 749.31,398.73"/>
<circle cx="792" cy="407" r="10"/><rect x="790.7" y="392.5" width="2.6" height="6" transform="rotate(0.0 792 407)"/><rect x="790.7" y="392.5" width="2.6" height="6" transform="rotate(30.0 792 407)"/><rect x="790.7" y="392.5" width="2.6" height="6" transform="rotate(60.0 792 407)"/><rect x="790.7" y="392.5" width="2.6" height="6" transform="rotate(90.0 792 407)"/><rect x="790.7" y="392.5" width="2.6" height="6" transform="rotate(120.0 792 407)"/><rect x="790.7" y="392.5" width="2.6" height="6" transform="rotate(150.0 792 407)"/><rect x="790.7" y="392.5" width="2.6" height="6" transform="rotate(180.0 792 407)"/><rect x="790.7" y="392.5" width="2.6" height="6" transform="rotate(210.0 792 407)"/><rect x="790.7" y="392.5" width="2.6" height="6" transform="rotate(240.0 792 407)"/><rect x="790.7" y="392.5" width="2.6" height="6" transform="rotate(270.0 792 407)"/><rect x="790.7" y="392.5" width="2.6" height="6" transform="rotate(300.0 792 407)"/><rect x="790.7" y="392.5" width="2.6" height="6" transform="rotate(330.0 792 407)"/>
<polygon points="832.00,392.50 833.27,400.60 837.55,393.60 835.63,401.57 842.25,396.75 837.43,403.37 845.40,401.45 838.40,405.73 846.50,407.00 838.40,408.27 845.40,412.55 837.43,410.63 842.25,417.25 835.63,412.43 837.55,420.40 833.27,413.40 832.00,421.50 830.73,413.40 826.45,420.40 828.37,412.43 821.75,417.25 826.57,410.63 818.60,412.55 825.60,408.27 817.50,407.00 825.60,405.73 818.60,401.45 826.57,403.37 821.75,396.75 828.37,401.57 826.45,393.60 830.73,400.60"/>
<polygon points="872.00,392.50 874.77,400.30 882.25,396.75 878.70,404.23 886.50,407.00 878.70,409.77 882.25,417.25 874.77,413.70 872.00,421.50 869.23,413.70 861.75,417.25 865.30,409.77 857.50,407.00 865.30,404.23 861.75,396.75 869.23,400.30"/>
<polygon points="912.00,392.50 913.75,398.18 917.55,393.60 916.99,399.53 922.25,396.75 919.47,402.01 925.40,401.45 920.82,405.25 926.50,407.00 920.82,408.75 925.40,412.55 919.47,411.99 922.25,417.25 916.99,414.47 917.55,420.40 913.75,415.82 912.00,421.50 910.25,415.82 906.45,420.40 907.01,414.47 901.75,417.25 904.53,411.99 898.60,412.55 903.18,408.75 897.50,407.00 903.18,405.25 898.60,401.45 904.53,402.01 901.75,396.75 907.01,399.53 906.45,393.60 910.25,398.18"/>
<polygon points="752.00,432.50 753.98,437.05 757.55,433.60 757.64,438.56 762.25,436.75 760.44,441.36 765.40,441.45 761.95,445.02 766.50,447.00 761.95,448.98 765.40,452.55 760.44,452.64 762.25,457.25 757.64,455.44 757.55,460.40 753.98,456.95 752.00,461.50 750.02,456.95 746.45,460.40 746.36,455.44 741.75,457.25 743.56,452.64 738.60,452.55 742.05,448.98 737.50,447.00 742.05,445.02 738.60,441.45 743.56,441.36 741.75,436.75 746.36,438.56 746.45,433.60 750.02,437.05"/>
<polygon points="792.00,432.50 793.56,439.18 797.55,433.60 796.43,440.37 802.25,436.75 798.63,442.57 805.40,441.45 799.82,445.44 806.50,447.00 799.82,448.56 805.40,452.55 798.63,451.43 802.25,457.25 796.43,453.63 797.55,460.40 793.56,454.82 792.00,461.50 790.44,454.82 786.45,460.40 787.57,453.63 781.75,457.25 785.37,451.43 778.60,452.55 784.18,448.56 777.50,447.00 784.18,445.44 778.60,441.45 785.37,442.57 781.75,436.75 787.57,440.37 786.45,433.60 790.44,439.18"/>
<polygon points="832.00,432.50 833.13,441.31 837.55,433.60 835.22,442.18 842.25,436.75 836.82,443.78 845.40,441.45 837.69,445.87 846.50,447.00 837.69,448.13 845.40,452.55 836.82,450.22 842.25,457.25 835.22,451.82 837.55,460.40 833.13,452.69 832.00,461.50 830.87,452.69 826.45,460.40 828.78,451.82 821.75,457.25 827.18,450.22 818.60,452.55 826.31,448.13 817.50,447.00 826.31,445.87 818.60,441.45 827.18,443.78 821.75,436.75 828.78,442.18 826.45,433.60 830.87,441.31"/>
<circle cx="872" cy="447" r="11"/><circle cx="872.00" cy="436.00" r="3.6"/><circle cx="879.78" cy="439.22" r="3.6"/><circle cx="883.00" cy="447.00" r="3.6"/><circle cx="879.78" cy="454.78" r="3.6"/><circle cx="872.00" cy="458.00" r="3.6"/><circle cx="864.22" cy="454.78" r="3.6"/><circle cx="861.00" cy="447.00" r="3.6"/><circle cx="864.22" cy="439.22" r="3.6"/>
<polygon points="912.00,432.50 915.88,437.62 922.25,436.75 921.38,443.12 926.50,447.00 921.38,450.88 922.25,457.25 915.88,456.38 912.00,461.50 908.12,456.38 901.75,457.25 902.62,450.88 897.50,447.00 902.62,443.12 901.75,436.75 908.12,437.62"/>
<polygon points="752.00,472.50 754.60,479.00 760.52,475.27 758.80,482.06 765.79,482.52 760.41,487.00 765.79,491.48 758.80,491.94 760.52,498.73 754.60,495.00 752.00,501.50 749.40,495.00 743.48,498.73 745.20,491.94 738.21,491.48 743.59,487.00 738.21,482.52 745.20,482.06 743.48,475.27 749.40,479.00"/>
<polygon points="792.00,472.50 796.16,476.95 802.25,476.75 802.05,482.84 806.50,487.00 802.05,491.16 802.25,497.25 796.16,497.05 792.00,501.50 787.84,497.05 781.75,497.25 781.95,491.16 777.50,487.00 781.95,482.84 781.75,476.75 787.84,476.95"/>
<polygon points="832.00,472.50 835.57,477.19 841.32,475.89 841.04,481.78 846.28,484.48 842.28,488.81 844.56,494.25 838.71,495.00 836.96,500.63 832.00,497.44 827.04,500.63 825.29,495.00 819.44,494.25 821.72,488.81 817.72,484.48 822.96,481.78 822.68,475.89 828.43,477.19"/>
<polygon points="872.00,472.50 875.30,474.67 879.25,474.44 881.02,477.98 884.56,479.75 884.33,483.70 886.50,487.00 884.33,490.30 884.56,494.25 881.02,496.02 879.25,499.56 875.30,499.33 872.00,501.50 868.70,499.33 864.75,499.56 862.98,496.02 859.44,494.25 859.67,490.30 857.50,487.00 859.67,483.70 859.44,479.75 862.98,477.98 864.75,474.44 868.70,474.67"/>
<polygon points="912.00,472.50 914.55,474.20 917.55,473.60 919.25,476.15 922.25,476.75 922.85,479.75 925.40,481.45 924.80,484.45 926.50,487.00 924.80,489.55 925.40,492.55 922.85,494.25 922.25,497.25 919.25,497.85 917.55,500.40 914.55,499.80 912.00,501.50 909.45,499.80 906.45,500.40 904.75,497.85 901.75,497.25 901.15,494.25 898.60,492.55 899.20,489.55 897.50,487.00 899.20,484.45 898.60,481.45 901.15,479.75 901.75,476.75 904.75,476.15 906.45,473.60 909.45,474.20"/>
<polygon points="752.00,512.50 754.49,514.49 757.55,513.60 759.09,516.39 762.25,516.75 762.61,519.91 765.40,521.45 764.51,524.51 766.50,527.00 764.51,529.49 765.40,532.55 762.61,534.09 762.25,537.25 759.09,537.61 757.55,540.40 754.49,539.51 752.00,541.50 749.51,539.51 746.45,540.40 744.91,537.61 741.75,537.25 741.39,534.09 738.60,532.55 739.49,529.49 737.50,527.00 739.49,524.51 738.60,521.45 741.39,519.91 741.75,516.75 744.91,516.39 746.45,513.60 749.51,514.49"/>
<circle cx="792" cy="527" r="14.5"/>
<polygon points="837.70,513.13 845.84,521.22 845.87,532.70 837.78,540.84 826.30,540.87 818.16,532.78 818.13,521.30 826.22,513.16"/>
<polygon points="872.00,512.00 880.82,514.86 886.27,522.36 886.27,531.64 880.82,539.14 872.00,542.00 863.18,539.14 857.73,531.64 857.73,522.36 863.18,514.86"/>
<polygon points="912.00,512.00 916.85,520.33 926.27,522.36 919.85,529.55 920.82,539.14 912.00,535.25 903.18,539.14 904.15,529.55 897.73,522.36 907.15,520.33"/>
<polygon points="752.00,552.00 757.11,559.96 766.27,562.36 760.27,569.69 760.82,579.14 752.00,575.70 743.18,579.14 743.73,569.69 737.73,562.36 746.89,559.96"/>
<path d="M792.00 552.00 Q797.47 559.48 806.27 562.36 Q800.84 569.87 800.82 579.14 Q792.00 576.30 783.18 579.14 Q783.16 569.87 777.73 562.36 Q786.53 559.48 792.00 552.00Z"/>
<path d="M826 552h12v9h9v12h-9v9h-12v-9h-9v-12h9z"/>
<rect x="869" y="552" width="6" height="30" transform="rotate(0 872 567)"/>
<rect x="869" y="552" width="6" height="30" transform="rotate(60 872 567)"/>
<rect x="869" y="552" width="6" height="30" transform="rotate(120 872 567)"/>
<path d="M916.43 552.67 Q919.04 560.48 926.63 563.67 Q921.17 569.84 922.19 578.00 Q914.13 576.36 907.57 581.33 Q904.96 573.52 897.37 570.33 Q902.83 564.16 901.81 556.00 Q909.87 557.64 916.43 552.67Z"/>
<path d="M756.43 592.67 Q759.45 601.43 767.00 606.79 Q759.60 612.36 756.84 621.20 Q749.25 615.88 739.99 615.99 Q742.70 607.13 739.74 598.36 Q749.00 598.20 756.43 592.67Z"/>
<path d="M792.00 622.00 Q786.53 614.52 777.73 611.64 Q783.16 604.13 783.18 594.86 Q792.00 597.70 800.82 594.86 Q800.84 604.13 806.27 611.64 Q797.47 614.52 792.00 622.00Z"/>
<path d="M836.43 592.67 Q838.00 602.51 847.00 606.79 Q838.13 611.32 836.84 621.20 Q829.78 614.17 819.99 615.99 Q824.50 607.11 819.74 598.36 Q829.58 599.90 836.43 592.67Z"/>
<path d="M872.00 592.00 Q875.35 602.39 886.27 602.36 Q877.42 608.76 880.82 619.14 Q872.00 612.70 863.18 619.14 Q866.58 608.76 857.73 602.36 Q868.65 602.39 872.00 592.00Z"/>
<path d="M916.43 592.67 Q915.98 604.90 926.33 611.43 Q914.10 610.98 907.57 621.33 Q908.02 609.10 897.67 602.57 Q909.90 603.02 916.43 592.67Z"/>
<path d="M752.00 632.00 Q755.70 641.90 766.27 642.36 Q757.99 648.95 760.82 659.14 Q752.00 653.30 743.18 659.14 Q746.01 648.95 737.73 642.36 Q748.30 641.90 752.00 632.00Z"/>
<polygon points="792.00,632.00 795.97,641.54 806.27,642.36 798.42,649.09 800.82,659.14 792.00,653.75 783.18,659.14 785.58,649.09 777.73,642.36 788.03,641.54"/>
<polygon points="836.43,632.67 838.00,642.51 847.00,646.79 838.13,651.32 836.84,661.20 829.78,654.17 819.99,655.99 824.50,647.11 819.74,638.36 829.58,639.90"/>
<path d="M876.43 632.67 Q877.76 642.69 887.00 646.79 Q877.88 651.15 876.84 661.20 Q869.87 653.88 859.99 655.99 Q864.80 647.10 859.74 638.36 Q869.68 640.18 876.43 632.67Z"/>
<polygon points="912.00,662.00 908.03,652.46 897.73,651.64 905.58,644.91 903.18,634.86 912.00,640.25 920.82,634.86 918.42,644.91 926.27,651.64 915.97,652.46"/>
<polygon points="752.00,702.00 748.65,691.61 737.73,691.64 746.58,685.24 743.18,674.86 752.00,681.30 760.82,674.86 757.42,685.24 766.27,691.64 755.35,691.61"/>
<path d="M792.00 702.00 Q790.68 688.82 777.73 691.64 Q789.86 686.30 783.18 674.86 Q792.00 684.75 800.82 674.86 Q794.14 686.30 806.27 691.64 Q793.32 688.82 792.00 702.00Z"/>
<polygon points="832.00,673.50 845.50,687.00 832.00,700.50 818.50,687.00"/>
<polygon points="877.70,673.13 885.84,681.22 885.87,692.70 877.78,700.84 866.30,700.87 858.16,692.78 858.13,681.30 866.22,673.16"/>
<path d="M912.00 672.00 Q917.82 678.99 926.27 682.36 Q921.42 690.06 920.82 699.14 Q912.00 696.90 903.18 699.14 Q902.58 690.06 897.73 682.36 Q906.18 678.99 912.00 672.00Z"/>
<polygon points="752.00,712.00 766.27,722.36 760.82,739.14 743.18,739.14 737.73,722.36"/>
<polygon points="792.00,713.00 804.12,720.00 804.12,734.00 792.00,741.00 779.88,734.00 779.88,720.00"/>
<polygon points="839.95,713.11 848.00,726.94 840.05,740.83 824.05,740.89 816.00,727.06 823.95,713.17"/>
<polygon points="879.95,713.11 888.00,726.94 880.05,740.83 864.05,740.89 856.00,727.06 863.95,713.17"/>
<polygon points="917.70,713.13 925.84,721.22 925.87,732.70 917.78,740.84 906.30,740.87 898.16,732.78 898.13,721.30 906.22,713.16"/>
</g></svg>
</div>
<div class="a" style="left:932px;top:227px;width:17px;height:503px;background:linear-gradient(90deg,#e6e6e6,#f2f2f2 50%,#e8e8e8)"></div>
<svg style="left:936px;top:233px" width="9" height="5"><path d="M0 5h9L4.5 0z" fill="#333"/></svg>
<svg style="left:936px;top:720px" width="9" height="5"><path d="M0 0h9L4.5 5z" fill="#333"/></svg>
<div class="a" style="left:933px;top:245px;width:15px;height:83px;border:1px solid #8a8a8a;border-radius:2px;background:linear-gradient(90deg,#f8f8f8 0,#ececec 50%,#cfcfcf 60%,#dedede 100%)"></div>
<div class="a" style="left:937px;top:282px;width:7px;height:8px;background:linear-gradient(#444 0,#444 1px,transparent 1px,transparent 3px,#444 3px,#444 4px,transparent 4px,transparent 6px,#444 6px,#444 7px,transparent 7px)"></div><div class="a" style="left:9px;top:563px;width:719px;height:170px;background:#dde8f8"></div>
<div class="a" style="left:9px;top:563px;width:719px;height:20px;background:#bacfe9"></div>
<div class="t" style="left:12px;top:566px"><span class="j">カラー</span></div>
<svg style="left:642px;top:565px" width="16" height="16" viewBox="0 0 16 16"><path d="M1.5 14.5l8-8" stroke="#777" stroke-width="3.4" stroke-linecap="round"/><path d="M1.8 14.2l7.6-7.6" stroke="#f4f4f4" stroke-width="1.6" stroke-linecap="round"/><path d="M7.5 5.5l3 3" stroke="#c01040" stroke-width="3"/><path d="M9 4l3 3 2.2-2.2c.9-.9.9-2.1 0-3s-2.1-.9-3 0z" fill="#e8205a" stroke="#a01040" stroke-width=".6"/></svg>
<div class="a" style="left:662px;top:566px;width:14px;height:14px;background:#fff;border:1.5px solid #111"></div>
<svg style="left:714px;top:567px" width="9" height="10" viewBox="0 0 9 10"><path d="M2 1h5v5H2z" fill="#dde8f8" stroke="#3a64a8" stroke-width="1.2"/><path d="M5.5 1v5" stroke="#3a64a8" stroke-width="1.4"/><path d="M.5 6.5h8M4.5 6.5v3.5" stroke="#3a64a8" stroke-width="1.2"/></svg>
<div class="a" style="left:17px;top:590px;width:17px;height:17px;background:#f7a2d1"></div>
<div class="a" style="left:35px;top:590px;width:17px;height:17px;background:#fdc896"></div>
<div class="a" style="left:53px;top:590px;width:17px;height:17px;background:#93ef8e"></div>
<div class="a" style="left:71px;top:590px;width:17px;height:17px;background:#bccf31"></div>
<div class="a" style="left:89px;top:590px;width:17px;height:17px;background:#dfdfdf"></div>
<div class="a" style="left:107px;top:590px;width:17px;height:17px;background:#ffffff"></div>
<div class="a" style="left:17px;top:608px;width:17px;height:17px;background:#ee1385"></div>
<div class="a" style="left:35px;top:608px;width:17px;height:17px;background:#ffff27"></div>
<div class="a" style="left:53px;top:608px;width:17px;height:17px;background:#2fcf2f"></div>
<div class="a" style="left:71px;top:608px;width:17px;height:17px;background:#80c83a"></div>
<div class="a" style="left:89px;top:608px;width:17px;height:17px;background:#9dd9f7"></div>
<div class="a" style="left:107px;top:608px;width:17px;height:17px;background:#b6b3ef"></div>
<div class="a" style="left:17px;top:626px;width:17px;height:17px;background:#ff0000"></div>
<div class="a" style="left:35px;top:626px;width:17px;height:17px;background:#ffcd16"></div>
<div class="a" style="left:53px;top:626px;width:17px;height:17px;background:#238553"></div>
<div class="a" style="left:71px;top:626px;width:17px;height:17px;background:#4fb4b4"></div>
<div class="a" style="left:89px;top:626px;width:17px;height:17px;background:#15c4ff"></div>
<div class="a" style="left:107px;top:626px;width:17px;height:17px;background:#4f436f"></div>
<div class="a" style="left:17px;top:644px;width:17px;height:17px;background:#923c00"></div>
<div class="a" style="left:35px;top:644px;width:17px;height:17px;background:#ff9500"></div>
<div class="a" style="left:53px;top:644px;width:17px;height:17px;background:#008000"></div>
<div class="a" style="left:71px;top:644px;width:17px;height:17px;background:#1782a8"></div>
<div class="a" style="left:89px;top:644px;width:17px;height:17px;background:#1b7de3"></div>
<div class="a" style="left:107px;top:644px;width:17px;height:17px;background:#7a0068"></div>
<div class="a" style="left:17px;top:662px;width:17px;height:17px;background:#7a0000"></div>
<div class="a" style="left:35px;top:662px;width:17px;height:17px;background:#ff6600"></div>
<div class="a" style="left:53px;top:662px;width:17px;height:17px;background:#444400"></div>
<div class="a" style="left:71px;top:662px;width:17px;height:17px;background:#1f4880"></div>
<div class="a" style="left:89px;top:662px;width:17px;height:17px;background:#1d2b9e"></div>
<div class="a" style="left:107px;top:662px;width:17px;height:17px;background:#000000"></div>
<div class="t" style="left:43px;top:685px"><span class="j" style="font-size:10.5px">その他の色</span></div>
<div class="a" style="left:16px;top:708px;width:108px;height:22px;border:1px solid #707070;border-radius:3px;background:linear-gradient(#fafafa 0,#ececec 50%,#dcdcdc 100%)"></div>
<div class="a" style="left:18px;top:710px;width:18px;height:18px;background:#fff"></div>
<svg style="left:20px;top:711px" width="14" height="14" viewBox="0 0 14 14"><g fill="#1e4a80"><circle cx="2.5" cy="2.5" r="1.9"/><circle cx="2.5" cy="7.0" r="1.9"/><circle cx="2.5" cy="11.5" r="1.9"/><circle cx="7.0" cy="2.5" r="1.9"/><circle cx="7.0" cy="7.0" r="1.9"/><circle cx="7.0" cy="11.5" r="1.9"/><circle cx="11.5" cy="2.5" r="1.9"/><circle cx="11.5" cy="7.0" r="1.9"/><circle cx="11.5" cy="11.5" r="1.9"/></g></svg>
<div class="t" style="left:39px;top:711px;color:#111"><span class="j" style="font-size:10px;letter-spacing:-.6px">すべて</span></div>
<svg style="left:111px;top:717px" width="9" height="5"><path d="M0 0h9L4.5 5z" fill="#000"/></svg>
<div class="a" style="left:134px;top:583px;width:594px;height:133px;background:#fff;border-bottom:1px solid #c4d6ec"></div>
<svg style="left:134px;top:583px" width="594" height="132" viewBox="134 583 594 132"><g stroke="#b8b8b8" stroke-width="1">
<circle cx="181.6" cy="648.4" r="24" fill="#ff93c8"/>
<circle cx="211.6" cy="624.2" r="10.8" fill="#f54b9e"/>
<circle cx="220.6" cy="649.4" r="10.8" fill="#ffa4d0"/>
<circle cx="210.6" cy="674.2" r="10.8" fill="#fdd6e9"/>
<circle cx="279.6" cy="648.4" r="24" fill="#f1b4d4"/>
<circle cx="309.6" cy="624.2" r="10.8" fill="#d8508e"/>
<circle cx="318.6" cy="649.4" r="10.8" fill="#f1b4d4"/>
<circle cx="308.6" cy="674.2" r="10.8" fill="#f7dbe9"/>
<circle cx="377.6" cy="648.4" r="24" fill="#fe93aa"/>
<circle cx="407.6" cy="624.2" r="10.8" fill="#f65584"/>
<circle cx="416.6" cy="649.4" r="10.8" fill="#ffadc0"/>
<circle cx="406.6" cy="674.2" r="10.8" fill="#ffd5df"/>
<circle cx="475.6" cy="648.4" r="24" fill="#ff94c6"/>
<circle cx="505.6" cy="624.2" r="10.8" fill="#d5508f"/>
<circle cx="514.6" cy="649.4" r="10.8" fill="#999999"/>
<circle cx="504.6" cy="674.2" r="10.8" fill="#ffc3e0"/>
<circle cx="573.6" cy="648.4" r="24" fill="#ff96c8"/>
<circle cx="603.6" cy="624.2" r="10.8" fill="#da4f92"/>
<circle cx="612.6" cy="649.4" r="10.8" fill="#ee88f0"/>
<circle cx="602.6" cy="674.2" r="10.8" fill="#d4a9f1"/>
<circle cx="671.6" cy="648.4" r="24" fill="#ff96c8"/>
<circle cx="701.6" cy="624.2" r="10.8" fill="#de5578"/>
<circle cx="710.6" cy="649.4" r="10.8" fill="#c290ec"/>
<circle cx="700.6" cy="674.2" r="10.8" fill="#999999"/>
</g></svg>
<div class="a" style="left:134px;top:716px;width:594px;height:17px;background:linear-gradient(#f2f2f2,#e6e6e6)"></div>
<svg style="left:140px;top:720px" width="5" height="9"><path d="M5 0v9L0 4.5z" fill="#333"/></svg>
<svg style="left:716px;top:720px" width="5" height="9"><path d="M0 0v9L5 4.5z" fill="#333"/></svg>
<div class="a" style="left:152px;top:717px;width:15px;height:15px;border:1px solid #8a8a8a;border-radius:2px;background:linear-gradient(#f8f8f8 0,#eeeeee 50%,#d4d4d4 60%,#e0e0e0 100%)"></div><div class="a" style="left:8px;top:733px;width:944px;height:19px;border-top:1px solid #5d84bc;background:linear-gradient(#ffffff 0,#ffffff 1px,#d8e6f8 1px,#d2e3f8 6px,#b3d1f5 7px,#b8d4f5 100%)"></div>
<div class="t" style="left:12px;top:736px;color:#15428b"><span class="j">準備完了</span></div>
<div class="a" style="left:606px;top:736px;width:1px;height:15px;background:#9cb6d8"></div>
<div class="a" style="left:934px;top:736px;width:1px;height:15px;background:#9cb6d8"></div>
<div class="t" style="left:610px;top:737px;color:#6c7f96;font-size:11px">X: 162</div>
<div class="t" style="left:652px;top:737px;color:#6c7f96;font-size:11px">Y: 160</div>
<div class="t" style="left:688px;top:737px;color:#6c7f96;font-size:11px"><span class="j" style="font-size:11.5px">幅</span>: 106</div>
<div class="t" style="left:733px;top:737px;color:#6c7f96;font-size:11px"><span class="j" style="font-size:11.5px">高さ</span>: 82</div>
<div class="t" style="left:785px;top:737px;color:#6c7f96;font-size:11px"><span class="j" style="font-size:11.5px">傾斜</span>(<span class="j" style="font-size:11.5px">水平</span>): 0</div>
<div class="t" style="left:859px;top:737px;color:#6c7f96;font-size:11px"><span class="j" style="font-size:11.5px">傾斜</span>(<span class="j" style="font-size:11.5px">垂直</span>): 0</div>
<svg style="left:940px;top:740px" width="10" height="10"><g fill="#3a5a8a"><rect x="8" y="0" width="2" height="2"/><rect x="4" y="4" width="2" height="2"/><rect x="8" y="4" width="2" height="2"/><rect x="0" y="8" width="2" height="2"/><rect x="4" y="8" width="2" height="2"/><rect x="8" y="8" width="2" height="2"/></g></svg></body></html>
